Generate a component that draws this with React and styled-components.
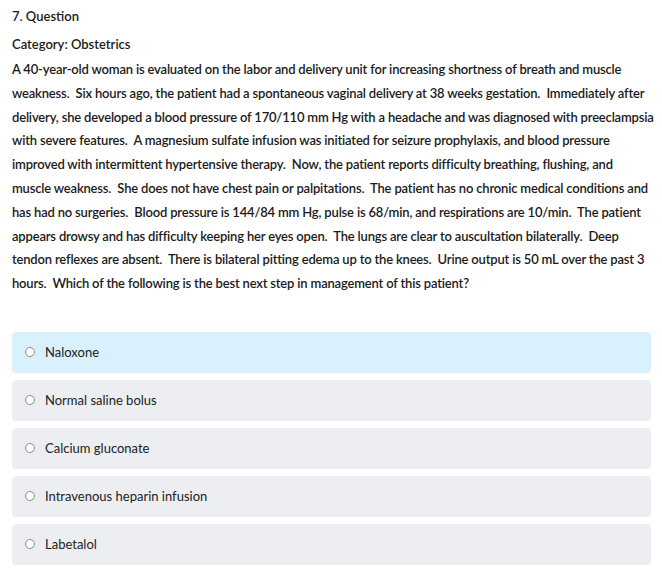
import styled, { createGlobalStyle } from "styled-components";

const GlobalStyle = createGlobalStyle`
  body {
    margin: 0;
    background: #fff;
    font-family: Lato, "Open Sans", sans-serif;
    color: #1b1b1b;
  }
`;

const options = [
  "Naloxone",
  "Normal saline bolus",
  "Calcium gluconate",
  "Intravenous heparin infusion",
  "Labetalol",
];

// line breaks kept as in the original layout
const stem = [
  "A 40-year-old woman is evaluated on the labor and delivery unit for increasing shortness of breath and muscle",
  "weakness.\u00a0 Six hours ago, the patient had a spontaneous vaginal delivery at 38 weeks gestation.\u00a0 Immediately after",
  "delivery, she developed a blood pressure of 170/110 mm Hg with a headache and was diagnosed with preeclampsia",
  "with severe features.\u00a0 A magnesium sulfate infusion was initiated for seizure prophylaxis, and blood pressure",
  "improved with intermittent hypertensive therapy.\u00a0 Now, the patient reports difficulty breathing, flushing, and",
  "muscle weakness.\u00a0 She does not have chest pain or palpitations.\u00a0 The patient has no chronic medical conditions and",
  "has had no surgeries.\u00a0 Blood pressure is 144/84 mm Hg, pulse is 68/min, and respirations are 10/min.\u00a0 The patient",
  "appears drowsy and has difficulty keeping her eyes open.\u00a0 The lungs are clear to auscultation bilaterally.\u00a0 Deep",
  "tendon reflexes are absent.\u00a0 There is bilateral pitting edema up to the knees.\u00a0 Urine output is 50 mL over the past 3",
  "hours.\u00a0 Which of the following is the best next step in management of this patient?",
];

export default function App() {
  return (
    <Page>
      <GlobalStyle />
      <Heading>7. Question</Heading>
      <Category>Category: Obstetrics</Category>
      <Stem>
        {stem.map((l, i) => (
          <StemLine key={i}>{l} </StemLine>
        ))}
      </Stem>
      <Choices>
        {options.map((o, i) => (
          <Choice key={o} $active={i === 0}>
            <Radio />
            <span>{o}</span>
          </Choice>
        ))}
      </Choices>
    </Page>
  );
}

const Page = styled.div`
  padding: 6px 11px 10px 12px;
`;

const Heading = styled.div`
  font-size: 13px;
  font-weight: 600;
  line-height: 20px;
  margin-bottom: 8px;
`;

const Category = styled.div`
  font-size: 13px;
  font-weight: 600;
  line-height: 20px;
  margin-bottom: 4px;
`;

const Stem = styled.p`
  margin: 0 -8px 0 0;
  font-size: 13px;
  font-weight: 600;
  line-height: 23.8px;
  letter-spacing: -0.18px;
`;

const StemLine = styled.span`
  display: block;
  white-space: nowrap;
`;

const Choices = styled.div`
  margin-top: 36px;
  display: flex;
  flex-direction: column;
  gap: 7px;
`;

const Choice = styled.div`
  height: 41px;
  border-radius: 4px;
  background: ${({ $active }) => ($active ? "#d9f1fc" : "#eceef1")};
  display: flex;
  align-items: center;
  padding-left: 13px;
  gap: 10px;
  font-size: 13px;
  color: #222;
`;

const Radio = styled.span`
  width: 10px;
  height: 10px;
  border-radius: 50%;
  border: 1px solid #8a8a8a;
  background: #fff;
  box-sizing: border-box;
  flex: none;
`;
